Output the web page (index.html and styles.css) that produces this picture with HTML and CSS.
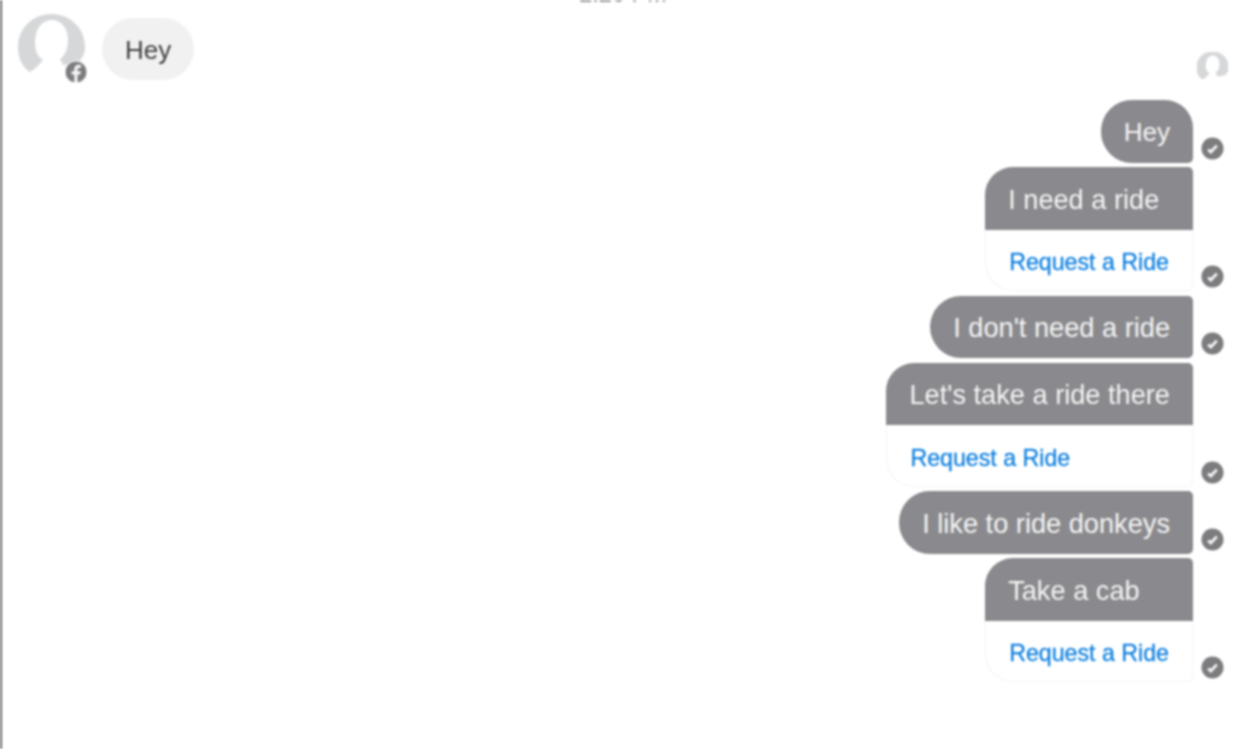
FILE: index.html
```html
<!DOCTYPE html>
<html lang="en">
<head>
<meta charset="utf-8">
<title>Chat</title>
<link rel="stylesheet" href="styles.css">
</head>
<body>
<svg class="defs" width="0" height="0" aria-hidden="true">
  <symbol id="head" viewBox="0 0 67 58">
    <path d="M12 58C4 53 0 44 0 33C0 14 15 0 33.500 0C52 0 67 14 67 33C67 41 63 47 58 49L45 51L42 45C47 42 50 34 50 26C50 14 43 6 34 6C24 6 17 15 17 29C17 37 20 43 25 46C21 51 17 55 12 58Z"/>
  </symbol>
  <symbol id="tick" viewBox="0 0 24 24">
    <circle cx="12" cy="12" r="11.500" fill="#7c7c7f"/>
    <path d="M7.500 13L10.300 15.700L16.500 9" fill="none" stroke="#f6f6f6" stroke-width="3"/>
  </symbol>
</svg>
<main class="page">
  <div class="time">2:20 PM</div>
  <section class="incoming">
    <div class="avatar">
      <svg class="head" viewBox="0 0 67 58"><use href="#head"/></svg>
      <span class="badge">
        <svg viewBox="0 0 24 24" width="24" height="24">
          <circle cx="12" cy="12" r="11" fill="#7c7c7f" stroke="#ffffff" stroke-width="1"/>
          <path d="M13.500 23V14.500H16.300L16.800 11.200H13.500V9.500C13.500 8.500 13.900 7.900 15.100 7.900H16.900V5C16.400 4.900 15.500 4.800 14.500 4.800C12 4.800 10.300 6.300 10.300 9V11.200H7.500V14.500H10.300V23Z" fill="#f6f6f6"/>
        </svg>
      </span>
    </div>
    <div class="bubble-in">Hey</div>
  </section>
  <svg class="seen" viewBox="0 0 67 58"><use href="#head"/></svg>
  <section class="thread">
    <div class="row">
      <div class="msg first">Hey</div>
      <svg class="tick"><use href="#tick"/></svg>
    </div>
    <div class="row">
      <div class="card">
        <div class="card-top">I need a ride</div>
        <div class="card-action">Request a Ride</div>
      </div>
      <svg class="tick"><use href="#tick"/></svg>
    </div>
    <div class="row">
      <div class="msg">I don't need a ride</div>
      <svg class="tick"><use href="#tick"/></svg>
    </div>
    <div class="row">
      <div class="card">
        <div class="card-top">Let's take a ride there</div>
        <div class="card-action">Request a Ride</div>
      </div>
      <svg class="tick"><use href="#tick"/></svg>
    </div>
    <div class="row">
      <div class="msg">I like to ride donkeys</div>
      <svg class="tick"><use href="#tick"/></svg>
    </div>
    <div class="row">
      <div class="card">
        <div class="card-top">Take a cab</div>
        <div class="card-action">Request a Ride</div>
      </div>
      <svg class="tick"><use href="#tick"/></svg>
    </div>
  </section>
</main>
</body>
</html>
```
FILE: styles.css
```css
* { box-sizing: border-box; }
html, body { margin: 0; height: 100%; background: #fff; overflow: hidden; }
body { font-family: "Liberation Sans", Arial, sans-serif; }
.defs { position: absolute; }
.page {
  height: 749px;
  border-left: 2px solid #666;
  padding: 0 17px 0 16px;
  display: flex;
  flex-direction: column;
  overflow: hidden;
  filter: blur(0.8px);
}
.time {
  height: 24px;
  margin-top: -18px;
  line-height: 24px;
  text-align: center;
  font-size: 23.500px;
  color: #8e8e8e;
  padding-left: 4px;
}
.incoming {
  margin-top: 8px;
  height: 66px;
  display: flex;
  align-items: flex-start;
  gap: 17px;
}
.avatar { position: relative; width: 67px; height: 58px; flex: none; }
.head { display: block; width: 67px; height: 58px; fill: #d5d7d9; }
.badge { position: absolute; left: 46px; top: 46px; width: 24px; height: 24px; }
.badge svg { display: block; }
.bubble-in {
  margin-top: 4px;
  height: 62px;
  padding: 2px 23px 0;
  display: flex;
  align-items: center;
  font-size: 26px;
  color: #404040;
  background: #f1f1f1;
  border-radius: 31px;
}
.seen {
  align-self: flex-end;
  width: 31px;
  height: 29px;
  margin-top: -29px;
  margin-right: -4px;
  fill: #d5d7d9;
  stroke: #d5d7d9;
  stroke-width: 3px;
  overflow: visible;
  flex: none;
}
.thread {
  margin-top: 20px;
  display: flex;
  flex-direction: column;
  gap: 4.500px;
}
.row {
  display: flex;
  justify-content: flex-end;
  align-items: flex-end;
  gap: 8px;
}
.tick { width: 23px; height: 23px; margin-bottom: 3px; flex: none; }
.msg, .card-top {
  height: 62.500px;
  padding: 3px 23px 0;
  display: flex;
  align-items: center;
  font-size: 27.200px;
  color: #f4f4f4;
  background: #8a8a8e;
}
.msg { border-radius: 31px 5px 5px 31px; }
.msg.first { border-top-right-radius: 28px; font-size: 26px; padding-top: 2px; }
.card { width: max-content; height: 124px; display: flex; flex-direction: column; }
.card-top { border-radius: 28px 5px 0 0; }
.card-action {
  flex: 1;
  padding: 6px 23px 0;
  display: flex;
  align-items: center;
  font-size: 23.200px;
  color: #0f80e0;
  -webkit-text-stroke: 0.3px #0f80e0;
  border: 1px solid #f3f3f3;
  border-top: 0;
  border-radius: 0 0 5px 28px;
}
```
